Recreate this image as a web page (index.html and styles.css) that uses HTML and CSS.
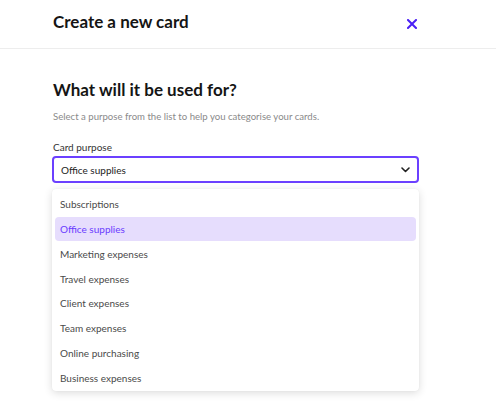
FILE: index.html
```html
<!DOCTYPE html>
<html lang="en">
<head>
<meta charset="utf-8">
<title>Create a new card</title>
<link rel="stylesheet" href="styles.css">
</head>
<body>
<header class="header">
  <h1 class="title">Create a new card</h1>
  <button class="close" aria-label="Close">
    <svg width="10" height="10" viewBox="0 0 10 10"><path d="M1 1L9 9M9 1L1 9" stroke="#4a20f5" stroke-width="2" stroke-linecap="square" fill="none"/></svg>
  </button>
</header>
<main class="content">
  <h2 class="heading">What will it be used for?</h2>
  <p class="subtitle">Select a purpose from the list to help you categorise your cards.</p>
  <label class="label">Card purpose</label>
  <div class="select">
    <span class="select-value">Office supplies</span>
    <svg class="chevron" width="9" height="6" viewBox="0 0 9 6"><path d="M1 1L4.5 4.5L8 1" stroke="#222" stroke-width="1.6" fill="none" stroke-linecap="round" stroke-linejoin="round"/></svg>
  </div>
  <ul class="menu">
    <li class="option">Subscriptions</li>
    <li class="option selected">Office supplies</li>
    <li class="option">Marketing expenses</li>
    <li class="option">Travel expenses</li>
    <li class="option">Client expenses</li>
    <li class="option">Team expenses</li>
    <li class="option">Online purchasing</li>
    <li class="option">Business expenses</li>
  </ul>
</main>
</body>
</html>
```
FILE: styles.css
```css
* { box-sizing: border-box; }
html, body { margin: 0; padding: 0; background: #fff; }
body {
  font-family: "Lato", "Liberation Sans", sans-serif;
  color: #1a1a1a;
  width: 496px;
  height: 419px;
  overflow: hidden;
}
.header {
  height: 49px;
  border-bottom: 1px solid #ededed;
  display: flex;
  justify-content: space-between;
  align-items: flex-start;
  padding: 0 78px 0 53px;
}
.title {
  margin: 12px 0 0;
  font-size: 17px;
  font-weight: 700;
  line-height: 20px;
  color: #151515;
}
.close {
  border: 0;
  background: none;
  padding: 0;
  margin: 19px 1px 0 0;
  width: 10px;
  height: 10px;
  display: block;
}
.close svg { display: block; }
.content {
  padding: 0 78px 0 53px;
}
.heading {
  margin: 29px 0 0;
  font-size: 17px;
  line-height: 24px;
  font-weight: 700;
  color: #151515;
}
.subtitle {
  margin: 8px 0 0;
  font-size: 9.6px;
  line-height: 14px;
  color: #8a8a8a;
}
.label {
  display: block;
  margin-top: 16px;
  font-size: 10px;
  line-height: 14px;
  color: #333;
}
.select {
  margin: 2px -1px 0;
  height: 27px;
  border: 2px solid #6b40ff;
  border-radius: 4px;
  display: flex;
  align-items: center;
  justify-content: space-between;
  padding: 0 7px 0 7px;
  font-size: 10px;
  color: #222;
}
.menu {
  list-style: none;
  margin: 6px -1px 0;
  padding: 3px 3px 1px;
  background: #fff;
  border-radius: 4px;
  box-shadow: 0 2px 8px rgba(0,0,0,0.14), 0 0 1px rgba(0,0,0,0.08);
  display: flex;
  flex-direction: column;
  gap: 0.85px;
}
.option {
  height: 24px;
  display: flex;
  align-items: center;
  padding: 0 5px;
  font-size: 10px;
  color: #4a4a4a;
  border-radius: 4px;
}
.option.selected {
  background: #e6ddfd;
  color: #6a3bff;
}
```
